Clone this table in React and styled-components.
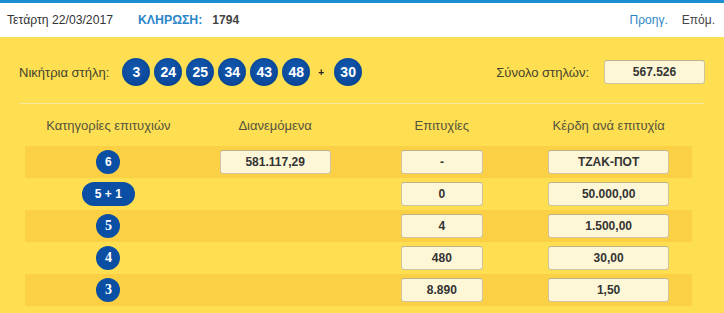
import React from 'react';
import styled, { createGlobalStyle } from 'styled-components';

const GlobalStyle = createGlobalStyle`
  body {
    margin: 0;
    font-family: 'Liberation Sans', Arial, sans-serif;
    background: #fedf52;
  }
`;

const Page = styled.div`
  width: 724px;
  height: 313px;
  overflow: hidden;
  background: #fedf52;
`;

const TopBar = styled.div`
  display: flex;
  align-items: center;
  justify-content: space-between;
  height: 34px;
  padding: 0 9px 0 7px;
  background: #fff;
  border-top: 3px solid #1b8fd3;
  font-size: 12px;
`;

const DrawInfo = styled.div`
  display: flex;
  align-items: center;
`;

const DateText = styled.span`
  color: #333;
  font-size: 12.2px;
  margin-right: 25px;
`;

const DrawLabel = styled.span`
  color: #2b86c9;
  font-size: 12.3px;
  font-weight: bold;
  margin-right: 10px;
`;

const DrawNumber = styled.span`
  color: #444;
  font-weight: bold;
`;

const Nav = styled.div`
  display: flex;
  gap: 14px;
`;

const NavLink = styled.a`
  color: ${(p) => (p.$active ? '#2b86c9' : '#444')};
  text-decoration: none;
  cursor: pointer;
`;

const Content = styled.div`
  padding-top: 20px;
`;

const WinningRow = styled.div`
  display: flex;
  align-items: center;
  justify-content: space-between;
  height: 30px;
  padding: 0 19px;
`;

const Label = styled.span`
  color: #44432f;
  font-size: 13px;
`;

const Balls = styled.div`
  display: flex;
  align-items: center;
  gap: 4px;
  margin-left: 13px;
  flex: 1;
`;

const Ball = styled.span`
  display: flex;
  align-items: center;
  justify-content: center;
  width: 28px;
  height: 28px;
  border-radius: 50%;
  background: radial-gradient(circle at 45% 40%, #1459ad 0%, #0b4b9d 55%, #073b84 100%);
  color: #fff;
  font-size: 14px;
  font-weight: bold;
`;

const Plus = styled.span`
  margin: 0 6px 0 4px;
  color: #222;
  font-size: 10px;
  font-weight: bold;
`;

const Total = styled.div`
  display: flex;
  align-items: center;
  gap: 15px;
`;

const ValueBox = styled.div`
  display: flex;
  align-items: center;
  justify-content: center;
  box-sizing: border-box;
  width: ${(p) => p.$w}px;
  height: 24px;
  background: #fdf6d7;
  border: 1px solid #cfc49c;
  border-top-color: #bdb28a;
  border-radius: 3px;
  color: #333;
  font-size: 12px;
  font-weight: bold;
`;

const Divider = styled.div`
  margin: 16px 20px 0 19px;
  border-top: 1px solid #f6e79c;
`;

const Table = styled.div`
  width: 667px;
  margin-left: 25px;
`;

const HeaderRow = styled.div`
  display: grid;
  grid-template-columns: repeat(4, 1fr);
  align-items: center;
  height: 42px;
`;

const HeaderCell = styled.div`
  text-align: center;
  color: #55533f;
  font-size: 13px;
`;

const Row = styled.div`
  display: grid;
  grid-template-columns: repeat(4, 1fr);
  align-items: center;
  height: 32px;
  background: ${(p) => (p.$striped ? '#fcd045' : 'transparent')};
`;

const Cell = styled.div`
  display: flex;
  justify-content: center;
`;

const Badge = styled.span`
  display: flex;
  align-items: center;
  justify-content: center;
  min-width: 24px;
  height: 24px;
  padding: 0 ${(p) => (p.$pill ? '13px' : '0')};
  box-sizing: border-box;
  border-radius: 12px;
  background: #0a4fa3;
  color: #fff;
  font-family: ${(p) => (p.$serif ? "'Liberation Serif', 'Times New Roman', serif" : "'Liberation Sans', Arial, sans-serif")};
  font-size: ${(p) => (p.$serif ? '14px' : '12px')};
  font-weight: bold;
`;

const numbers = ['3', '24', '25', '34', '43', '48'];

const categories = [
  { cat: '6', dist: '581.117,29', wins: '-', prize: 'ΤΖΑΚ-ΠΟΤ' },
  { cat: '5 + 1', pill: true, wins: '0', prize: '50.000,00' },
  { cat: '5', serif: true, wins: '4', prize: '1.500,00' },
  { cat: '4', serif: true, wins: '480', prize: '30,00' },
  { cat: '3', serif: true, wins: '8.890', prize: '1,50' },
];

const App = () => {
  return (
    <Page>
      <GlobalStyle />
      <TopBar>
        <DrawInfo>
          <DateText>Τετάρτη 22/03/2017</DateText>
          <DrawLabel>ΚΛΗΡΩΣΗ:</DrawLabel>
          <DrawNumber>1794</DrawNumber>
        </DrawInfo>
        <Nav>
          <NavLink $active>Προηγ.</NavLink>
          <NavLink>Επόμ.</NavLink>
        </Nav>
      </TopBar>

      <Content>
        <WinningRow>
          <Label>Νικήτρια στήλη:</Label>
          <Balls>
            {numbers.map((n) => (
              <Ball key={n}>{n}</Ball>
            ))}
            <Plus>+</Plus>
            <Ball>30</Ball>
          </Balls>
          <Total>
            <Label>Σύνολο στηλών:</Label>
            <ValueBox $w={101}>567.526</ValueBox>
          </Total>
        </WinningRow>

        <Divider />

        <Table>
          <HeaderRow>
            <HeaderCell>Κατηγορίες επιτυχιών</HeaderCell>
            <HeaderCell>Διανεμόμενα</HeaderCell>
            <HeaderCell>Επιτυχίες</HeaderCell>
            <HeaderCell>Κέρδη ανά επιτυχία</HeaderCell>
          </HeaderRow>

          {categories.map((c, i) => (
            <Row key={c.cat} $striped={i % 2 === 0}>
              <Cell>
                <Badge $pill={c.pill} $serif={c.serif}>{c.cat}</Badge>
              </Cell>
              <Cell>{c.dist && <ValueBox $w={111}>{c.dist}</ValueBox>}</Cell>
              <Cell>
                <ValueBox $w={82}>{c.wins}</ValueBox>
              </Cell>
              <Cell>
                <ValueBox $w={121}>{c.prize}</ValueBox>
              </Cell>
            </Row>
          ))}
        </Table>
      </Content>
    </Page>
  );
};

export default App;
